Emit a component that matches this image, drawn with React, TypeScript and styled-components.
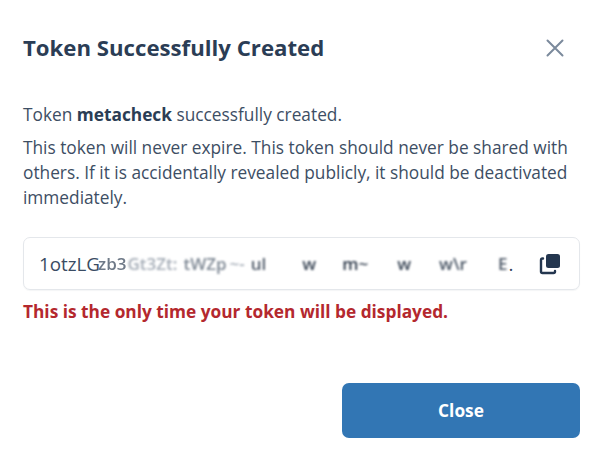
import styled, { createGlobalStyle } from "styled-components";

const GlobalStyle = createGlobalStyle`
  html, body {
    margin: 0;
    padding: 0;
    background: #ffffff;
    font-family: "Open Sans", "Liberation Sans", sans-serif;
  }
`;

const smudges = [
  { text: "zb3", blur: 0.7, gap: -2, tone: "#6f7a88" },
  { text: "Gt3Zt:", blur: 0.8, gap: 1, tone: "#a5adb7" },
  { text: "tWZp", blur: 0.8, gap: 6, tone: "#7e8894" },
  { text: "~-", blur: 1, gap: 3, tone: "#a5adb7" },
  { text: "ul", blur: 0.9, gap: 6, tone: "#4f5a69" },
  { text: "w", blur: 1, gap: 36, tone: "#3a4656" },
  { text: "m~", blur: 0.9, gap: 26, tone: "#2f3b4b" },
  { text: "w", blur: 1, gap: 29, tone: "#3a4656" },
  { text: "w\\r", blur: 1, gap: 28, tone: "#4a5665" },
  { text: "E", blur: 1, gap: 31, tone: "#4a5665" },
];

export default function App() {
  return (
    <>
      <GlobalStyle />
      <Modal>
        <Header>
          <Title>Token Successfully Created</Title>
          <CloseIcon aria-label="Close">
            <svg width="18" height="18" viewBox="0 0 18 18" fill="none">
              <path
                d="M1.5 1.5L16.5 16.5M16.5 1.5L1.5 16.5"
                stroke="#7b8a9c"
                strokeWidth="2"
                strokeLinecap="round"
              />
            </svg>
          </CloseIcon>
        </Header>
        <Body>
          <Line>
            Token <strong>metacheck</strong> successfully created.
          </Line>
          <Line>
            This token will never expire. This token should never be shared
            with others. If it is accidentally revealed publicly, it should be
            deactivated immediately.
          </Line>
        </Body>
        <TokenField>
          <TokenText>
            1otzLG
            {smudges.map((s, i) => (
              <Smudge key={i} $blur={s.blur} $gap={s.gap} $tone={s.tone}>
                {s.text}
              </Smudge>
            ))}
            <Dot>.</Dot>
          </TokenText>
          <CopyIcon aria-label="Copy">
            <svg width="22" height="22" viewBox="0 0 22 22" fill="none">
              <rect x="7" y="1" width="14" height="14" rx="2.5" fill="#24364f" />
              <path
                d="M4 5.5H3.5C2.4 5.5 2 6.3 2 7.2V18.5C2 19.6 2.6 20 3.5 20H14.5C15.6 20 16 19.4 16 18.5V18"
                stroke="#24364f"
                strokeWidth="2.4"
                strokeLinecap="round"
              />
            </svg>
          </CopyIcon>
        </TokenField>
        <Warning>This is the only time your token will be displayed.</Warning>
        <Footer>
          <CloseButton>Close</CloseButton>
        </Footer>
      </Modal>
    </>
  );
}

const Modal = styled.div`
  width: 604px;
  height: 461px;
  box-sizing: border-box;
  padding: 34px 24px 0 23px;
  display: flex;
  flex-direction: column;
  color: #2d3f57;
  overflow: hidden;
`;

const Header = styled.div`
  display: flex;
  align-items: center;
  justify-content: space-between;
  height: 28px;
  padding-right: 2px;
`;

const Title = styled.h2`
  margin: 0;
  font-size: 22.2px;
  line-height: 28px;
  font-weight: 700;
  color: #2b3d55;
`;

const CloseIcon = styled.span`
  display: flex;
  width: 18px;
  height: 18px;
  margin-right: 14px;
`;

const Body = styled.div`
  margin-top: 39.5px;
  display: flex;
  flex-direction: column;
  gap: 8px;
`;

const Line = styled.p`
  margin: 0;
  font-size: 17.3px;
  line-height: 25px;
  color: #3d4e64;

  strong {
    font-weight: 700;
    color: #2b3d55;
  }
`;

const TokenField = styled.div`
  margin-top: 27.5px;
  height: 53px;
  box-sizing: border-box;
  border: 1px solid #e4e7eb;
  border-radius: 7px;
  display: flex;
  align-items: center;
  justify-content: space-between;
  padding: 0 18px 0 15px;
  box-shadow: 0 1px 1px rgba(30, 50, 80, 0.05);
`;

const TokenText = styled.div`
  display: flex;
  align-items: center;
  font-size: 18.8px;
  color: #3a4c63;
  white-space: nowrap;
`;

const Smudge = styled.span<{ $blur: number; $gap: number; $tone: string }>`
  margin-left: ${(p) => p.$gap}px;
  filter: blur(${(p) => p.$blur}px);
  font-size: 17px;
  font-weight: 600;
  color: ${(p) => p.$tone};
`;

const Dot = styled.span`
  margin-left: 1px;
  color: #33465e;
`;

const CopyIcon = styled.span`
  display: flex;
  width: 22px;
  height: 22px;
`;

const Warning = styled.div`
  margin-top: 10px;
  font-size: 17.3px;
  line-height: 24px;
  font-weight: 700;
  color: #b4282e;
`;

const Footer = styled.div`
  margin-top: 59px;
  display: flex;
  justify-content: flex-end;
`;

const CloseButton = styled.button`
  width: 238px;
  height: 55px;
  border: none;
  border-radius: 7px;
  background: #3276b4;
  color: #ffffff;
  font-family: inherit;
  font-size: 17.3px;
  font-weight: 700;
`;
